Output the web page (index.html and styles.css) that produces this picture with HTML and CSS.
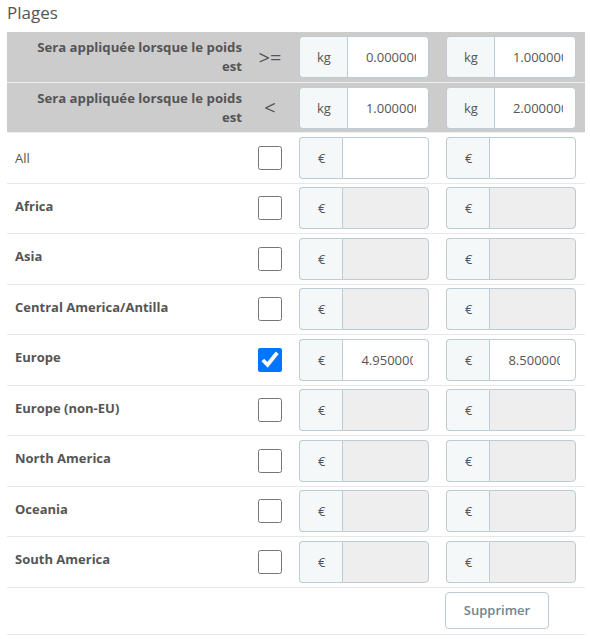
FILE: index.html
```html
<!DOCTYPE html>
<html>
<head>
<meta charset="utf-8">
<link rel="stylesheet" href="styles.css">
</head>
<body>
<div class="page">
  <div class="title">Plages</div>
  <div class="table">
    <div class="row head">
      <div class="label-cell">Sera appliquée lorsque le poids<br>est</div>
      <div class="op">&gt;=</div>
      <div class="cell"><div class="group"><span class="addon kg">kg</span><input class="field" type="text" value="0.000000"></div></div>
      <div class="cell"><div class="group"><span class="addon kg">kg</span><input class="field" type="text" value="1.000000"></div></div>
    </div>
    <div class="row head">
      <div class="label-cell">Sera appliquée lorsque le poids<br>est</div>
      <div class="op">&lt;</div>
      <div class="cell"><div class="group"><span class="addon kg">kg</span><input class="field" type="text" value="1.000000"></div></div>
      <div class="cell"><div class="group"><span class="addon kg">kg</span><input class="field" type="text" value="2.000000"></div></div>
    </div>

    <div class="row body">
      <div class="name plain">All</div>
      <div class="chk"><input type="checkbox"></div>
      <div class="cell"><div class="group"><span class="addon">€</span><input class="field" type="text" value=""></div></div>
      <div class="cell"><div class="group"><span class="addon">€</span><input class="field" type="text" value=""></div></div>
    </div>
    <div class="row body">
      <div class="name"><label>Africa</label></div>
      <div class="chk"><input type="checkbox"></div>
      <div class="cell"><div class="group"><span class="addon">€</span><input class="field" type="text" disabled></div></div>
      <div class="cell"><div class="group"><span class="addon">€</span><input class="field" type="text" disabled></div></div>
    </div>
    <div class="row body">
      <div class="name"><label>Asia</label></div>
      <div class="chk"><input type="checkbox"></div>
      <div class="cell"><div class="group"><span class="addon">€</span><input class="field" type="text" disabled></div></div>
      <div class="cell"><div class="group"><span class="addon">€</span><input class="field" type="text" disabled></div></div>
    </div>
    <div class="row body">
      <div class="name"><label>Central America/Antilla</label></div>
      <div class="chk"><input type="checkbox"></div>
      <div class="cell"><div class="group"><span class="addon">€</span><input class="field" type="text" disabled></div></div>
      <div class="cell"><div class="group"><span class="addon">€</span><input class="field" type="text" disabled></div></div>
    </div>
    <div class="row body">
      <div class="name"><label>Europe</label></div>
      <div class="chk"><input type="checkbox" checked></div>
      <div class="cell"><div class="group"><span class="addon">€</span><input class="field" type="text" value="4.950000"></div></div>
      <div class="cell"><div class="group"><span class="addon">€</span><input class="field" type="text" value="8.500000"></div></div>
    </div>
    <div class="row body">
      <div class="name"><label>Europe (non-EU)</label></div>
      <div class="chk"><input type="checkbox"></div>
      <div class="cell"><div class="group"><span class="addon">€</span><input class="field" type="text" disabled></div></div>
      <div class="cell"><div class="group"><span class="addon">€</span><input class="field" type="text" disabled></div></div>
    </div>
    <div class="row body">
      <div class="name"><label>North America</label></div>
      <div class="chk"><input type="checkbox"></div>
      <div class="cell"><div class="group"><span class="addon">€</span><input class="field" type="text" disabled></div></div>
      <div class="cell"><div class="group"><span class="addon">€</span><input class="field" type="text" disabled></div></div>
    </div>
    <div class="row body">
      <div class="name"><label>Oceania</label></div>
      <div class="chk"><input type="checkbox"></div>
      <div class="cell"><div class="group"><span class="addon">€</span><input class="field" type="text" disabled></div></div>
      <div class="cell"><div class="group"><span class="addon">€</span><input class="field" type="text" disabled></div></div>
    </div>
    <div class="row body">
      <div class="name"><label>South America</label></div>
      <div class="chk"><input type="checkbox"></div>
      <div class="cell"><div class="group"><span class="addon">€</span><input class="field" type="text" disabled></div></div>
      <div class="cell"><div class="group"><span class="addon">€</span><input class="field" type="text" disabled></div></div>
    </div>
    <div class="row foot">
      <div></div>
      <div></div>
      <div></div>
      <div class="cell"><button class="btn" type="button">Supprimer</button></div>
    </div>
  </div>
</div>
</body>
</html>
```

FILE: styles.css
```css
* { box-sizing: border-box; }

html, body {
  margin: 0;
  padding: 0;
  background: #fff;
}

body {
  font-family: "Open Sans", "Liberation Sans", sans-serif;
  font-size: 13px;
  color: #555;
}

.page {
  padding: 0 5px 0 7px;
}

.title {
  height: 32px;
  padding-top: 2px;
  font-size: 17px;
  line-height: 22px;
  color: #555;
}

.table {
  width: 578px;
}

.row {
  display: grid;
  grid-template-columns: 243px 40px 147px 148px;
  align-items: center;
}

.row.head {
  background: #cccccc;
  height: 50.5px;
  border-bottom: 1px solid #eeeeee;
  padding-top: 1px;
}

.row.body {
  height: 50.5px;
  border-bottom: 1px solid #e8e8e8;
}

.row.foot {
  height: 47px;
  border-bottom: 1px solid #e8e8e8;
  align-items: start;
  padding-top: 4px;
}

.label-cell {
  text-align: right;
  padding-right: 8px;
  font-weight: 700;
  font-size: 13.2px;
  line-height: 19px;
  color: #555;
}

.op {
  text-align: center;
  font-size: 20px;
  color: #555;
  padding-left: 0px;
}

.cell {
  padding-left: 9px;
}

.group {
  display: flex;
  width: 130px;
  height: 42px;
}

.addon {
  display: flex;
  align-items: center;
  justify-content: center;
  padding: 0 17px 0 18px;
  background: #f5f8f9;
  border: 1px solid #bbcdd2;
  border-right: 0;
  border-radius: 4px 0 0 4px;
  color: #555;
  font-size: 13px;
}

.addon.kg {
  padding: 0 16px 0 17px;
}

.field {
  flex: 1;
  min-width: 0;
  height: 42px;
  margin: 0;
  padding: 0 15px 0 18px;
  border: 1px solid #bbcdd2;
  border-radius: 0 4px 4px 0;
  background: #fff;
  font-family: "Open Sans", "Liberation Sans", sans-serif;
  font-size: 13px;
  color: #555;
  outline: none;
}

.head .field {
  padding-right: 12px;
}

.field:disabled {
  background: #eeeeee;
}

.name {
  padding-left: 8px;
  color: #555;
}

.name label {
  display: inline-block;
  font-weight: 700;
  margin-bottom: 5px;
}

.name.plain {
  font-weight: 400;
}

.chk {
  display: flex;
  justify-content: center;
}

.chk input {
  width: 24px;
  height: 24px;
  margin: 0;
}

.btn {
  width: 104px;
  height: 37px;
  margin-left: -1px;
  background: #fff;
  border: 1px solid #bbcdd2;
  border-radius: 4px;
  font-family: "Open Sans", "Liberation Sans", sans-serif;
  font-size: 13px;
  font-weight: 600;
  color: #6c868e;
}
```
